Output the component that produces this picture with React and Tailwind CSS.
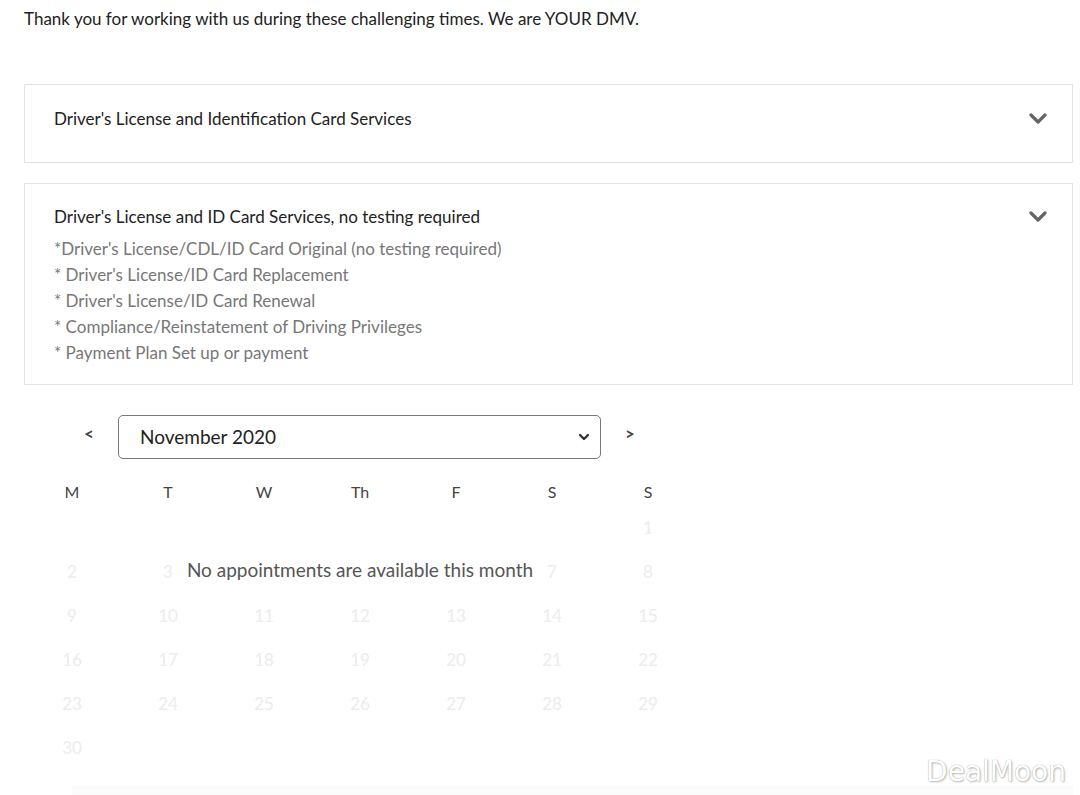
import { ChevronDown } from 'lucide-react';

const services = [
  '*Driver\'s License/CDL/ID Card Original (no testing required)',
  '* Driver\'s License/ID Card Replacement',
  '* Driver\'s License/ID Card Renewal',
  '* Compliance/Reinstatement of Driving Privileges',
  '* Payment Plan Set up or payment',
];

const days = ['M', 'T', 'W', 'Th', 'F', 'S', 'S'];

// November 2020, weeks start on Monday; the 1st falls on a Sunday.
// 4-6 sit under the "no appointments" notice, so they are left blank
const weeks = [
  [null, null, null, null, null, null, 1],
  [2, 3, null, null, null, 7, 8],
  [9, 10, 11, 12, 13, 14, 15],
  [16, 17, 18, 19, 20, 21, 22],
  [23, 24, 25, 26, 27, 28, 29],
  [30, null, null, null, null, null, null],
];

const Chevron = () => (
  <svg width="18" height="12" viewBox="0 0 18 12" className="text-[#666]">
    <polyline points="2,2 9,9 16,2" fill="none" stroke="currentColor" strokeWidth="3.2" strokeLinecap="round" strokeLinejoin="round" />
  </svg>
);

export default function App() {
  return (
    <div className="relative h-[795px] overflow-hidden bg-white font-['Lato','Liberation_Sans',sans-serif]">
      <div className="pl-[24px] pr-[7px] pt-[7px]">
        <p className="text-[17px] leading-[24px] text-[#222]">
          Thank you for working with us during these challenging times. We are YOUR DMV.
        </p>

        <div className="mt-[53px] flex flex-col gap-[20px]">
          <div className="flex h-[79px] items-start justify-between border border-[#e2e2e2] pl-[29px] pr-[25px] pt-[22px]">
            <h3 className="text-[17px] leading-[24px] text-[#222]">
              Driver's License and Identification Card Services
            </h3>
            <div className="pt-[6px]"><Chevron /></div>
          </div>

          <div className="border border-[#e2e2e2] pl-[29px] pr-[25px] pt-[21px] pb-[18px]">
            <div className="flex items-center justify-between">
              <h3 className="text-[17px] leading-[24px] text-[#222]">
                Driver's License and ID Card Services, no testing required
              </h3>
              <Chevron />
            </div>
            <ul className="mt-[7px]">
              {services.map((s) => (
                <li key={s} className="text-[17px] leading-[26px] text-[#777]">{s}</li>
              ))}
            </ul>
          </div>
        </div>

        {/* month picker */}
        <div className="mt-[30px] flex items-center">
          <button className="ml-[47px] -mt-[6px] w-[36px] text-center text-[17px] font-bold text-[#444]">&lt;</button>
          <div className="ml-[11px] flex h-[44px] w-[483px] items-center justify-between rounded-[5px] border border-[#777] pl-[21px] pr-[8px]">
            <span className="text-[19px] text-[#222]">November 2020</span>
            <ChevronDown size={16} strokeWidth={3.5} className="text-[#333]" />
          </div>
          <button className="ml-[11px] -mt-[6px] w-[36px] text-center text-[17px] font-bold text-[#444]">&gt;</button>
        </div>

        {/* calendar grid */}
        <div className="relative mt-[21px] w-[672px]">
          <div className="grid h-[24px] grid-cols-7 items-center">
            {days.map((d, i) => (
              <div key={i} className="text-center text-[16px] text-[#444]">{d}</div>
            ))}
          </div>
          <div className="mt-[2px]">
            {weeks.map((w, wi) => (
              <div key={wi} className="grid h-[44px] grid-cols-7 items-center">
                {w.map((n, i) => (
                  <div key={i} className="text-center text-[17px] text-[#ececec]">{n}</div>
                ))}
              </div>
            ))}
          </div>
          <div className="absolute left-[154px] top-[68px] flex h-[44px] w-[364px] items-center justify-center bg-white">
            <span className="text-[19px] text-[#555]">No appointments are available this month</span>
          </div>
        </div>

        <div className="ml-[48px] mt-[16px] h-[12px] bg-[#fbfbfb]" />
      </div>

      <div className="absolute right-[14px] bottom-[7px] font-['DejaVu_Sans',sans-serif] text-[28px] leading-[32px] text-white [text-shadow:0_0_1px_#999,1px_1px_2px_#bbb]">
        DealMoon
      </div>
    </div>
  );
}
